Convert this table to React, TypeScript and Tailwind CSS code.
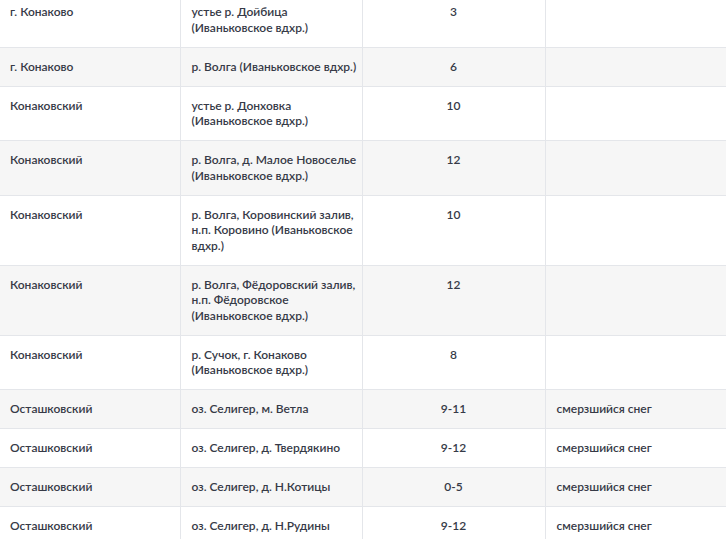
const rows: [string, string, string, string][] = [
  ['г. Конаково', 'устье р. Дойбица\n(Иваньковское вдхр.)', '3', ''],
  ['г. Конаково', 'р. Волга (Иваньковское вдхр.)', '6', ''],
  ['Конаковский', 'устье р. Донховка\n(Иваньковское вдхр.)', '10', ''],
  ['Конаковский', 'р. Волга, д. Малое Новоселье\n(Иваньковское вдхр.)', '12', ''],
  ['Конаковский', 'р. Волга, Коровинский залив,\nн.п. Коровино (Иваньковское\nвдхр.)', '10', ''],
  ['Конаковский', 'р. Волга, Фёдоровский залив,\nн.п. Фёдоровское\n(Иваньковское вдхр.)', '12', ''],
  ['Конаковский', 'р. Сучок, г. Конаково\n(Иваньковское вдхр.)', '8', ''],
  ['Осташковский', 'оз. Селигер, м. Ветла', '9-11', 'смерзшийся снег'],
  ['Осташковский', 'оз. Селигер, д. Твердякино', '9-12', 'смерзшийся снег'],
  ['Осташковский', 'оз. Селигер, д. Н.Котицы', '0-5', 'смерзшийся снег'],
  ['Осташковский', 'оз. Селигер, д. Н.Рудины', '9-12', 'смерзшийся снег'],
];

export default function App() {
  return (
    <div className="h-[539px] w-[726px] overflow-hidden bg-white font-['Lato',sans-serif] text-[12px] leading-[15.5px] font-semibold text-[#363a47]">
      <table className="-mt-[8px] w-[730px] table-fixed border-collapse">
        <colgroup>
          <col className="w-[180px]" />
          <col className="w-[182px]" />
          <col className="w-[183px]" />
          <col />
        </colgroup>
        <tbody>
          {rows.map((r, i) => (
            <tr key={i} className={i % 2 === 1 ? 'bg-[#f6f6f6]' : 'bg-white'}>
              <td className="border border-l-0 border-[#e4e6ea] pl-[10px] py-[11.25px] align-top">{r[0]}</td>
              <td className="whitespace-pre border border-[#e4e6ea] pl-[11px] py-[11.25px] align-top">{r[1]}</td>
              <td className="border border-[#e4e6ea] px-[4px] py-[11.25px] text-center align-top">{r[2]}</td>
              <td className="border border-[#e4e6ea] pl-[11px] py-[11.25px] align-top">{r[3]}</td>
            </tr>
          ))}
        </tbody>
      </table>
    </div>
  );
}
